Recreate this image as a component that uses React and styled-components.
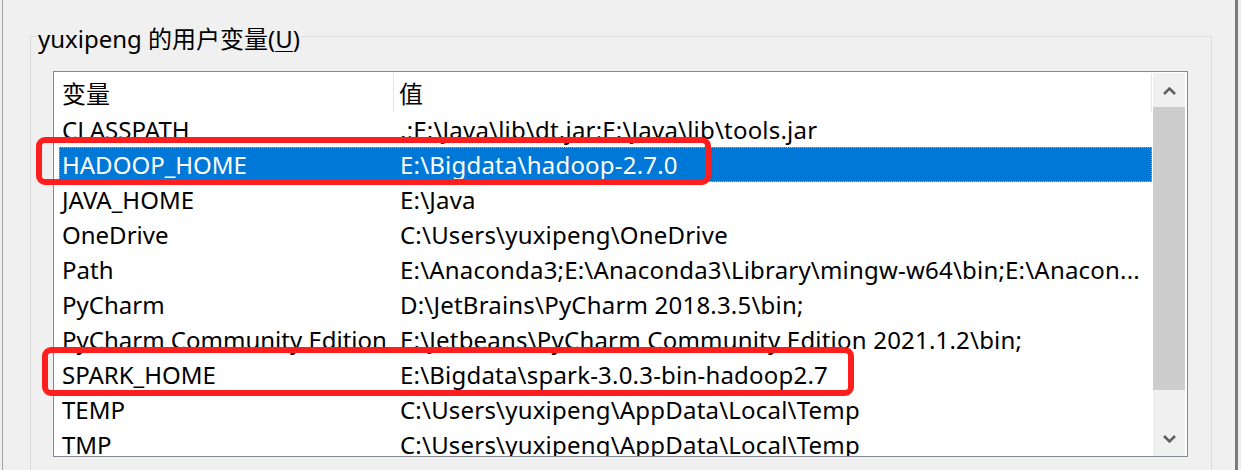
import React from "react";
import styled, { createGlobalStyle } from "styled-components";

const GlobalStyle = createGlobalStyle`
  body {
    margin: 0;
    background: #f0f0f0;
    font-family: "Noto Sans", "Noto Sans CJK SC", sans-serif;
  }
`;

const Screen = styled.div`
  position: relative;
  width: 1241px;
  height: 470px;
  overflow: hidden;
  display: flex;
  background: #f0f0f0;
  color: #000;
`;

const LeftEdge = styled.div`
  width: 2px;
  border-right: 1px solid #a0a0a0;
`;

const RightEdge = styled.div`
  width: 3px;
  border-left: 3px solid #7a7a7a;
  background: #eeeeee;
`;

const Main = styled.div`
  flex: 1;
  padding: 19px 23px 0 27px;
`;

const GroupBox = styled.fieldset`
  margin: 0;
  padding: 18px 23px 0 22px;
  border: 1px solid #dcdcdc;
  border-bottom: none;
  height: 500px;
  box-sizing: border-box;
`;

const Title = styled.legend`
  margin-left: -16px;
  padding: 6px 1px 0;
  font-size: 24px;
  line-height: 28px;
  color: #000;

  u {
    text-decoration-thickness: 1px;
    text-underline-offset: 3px;
  }
`;

const ListView = styled.div`
  display: flex;
  height: 386px;
  box-sizing: border-box;
  border: 1px solid #828790;
  background: #fff;
`;

const Table = styled.div`
  flex: 1;
  padding: 0 1px 0 5px;
  overflow: hidden;
  font-size: 24px;
`;

const Header = styled.div`
  display: grid;
  grid-template-columns: 335px 1fr;
  height: 40px;
  padding-top: 1px;
  box-sizing: border-box;
`;

const HeaderCell = styled.div`
  display: flex;
  align-items: center;
  padding-left: ${(p) => p.$pad}px;
  border-right: 1px solid #e5e5e5;
`;

const Row = styled.div`
  display: grid;
  grid-template-columns: 338px 1fr;
  height: 35px;
  line-height: 35px;
  align-items: center;
  white-space: nowrap;
  background: ${(p) => (p.$selected ? "#0078d7" : "transparent")};
  color: ${(p) => (p.$selected ? "#fff" : "#000")};
  outline: ${(p) => (p.$selected ? "1px dotted #e9a25b" : "none")};
  outline-offset: -1px;
`;

const Cell = styled.div`
  padding-left: 3px;
  overflow: ${(p) => (p.$value ? "hidden" : "visible")};
  letter-spacing: ${(p) => (p.$value ? "0.2px" : "0")};
`;

const ScrollBar = styled.div`
  width: 32px;
  margin: 1px 2px 0 0;
  display: flex;
  flex-direction: column;
  background: #f0f0f0;
`;

const ArrowButton = styled.div`
  height: 34px;
  display: flex;
  align-items: center;
  justify-content: center;
`;

const Thumb = styled.div`
  height: 283px;
  background: #cdcdcd;
`;

const Track = styled.div`
  flex: 1;
`;

const Mark = styled.div`
  position: absolute;
  left: ${(p) => p.$x}px;
  top: ${(p) => p.$y}px;
  width: ${(p) => p.$w}px;
  height: ${(p) => p.$h}px;
  box-sizing: border-box;
  border: 6px solid #fe1e1e;
  border-radius: 9px;
`;

const Chevron = ({ up }) => (
  <svg width="13" height="9" viewBox="0 0 13 9">
    <path
      d={up ? "M1 8 L6.5 2.5 L12 8" : "M1 1 L6.5 6.5 L12 1"}
      fill="none"
      stroke="#606060"
      strokeWidth="2.6"
    />
  </svg>
);

const rows = [
  ["CLASSPATH", ".;E:\\Java\\lib\\dt.jar;E:\\Java\\lib\\tools.jar"],
  ["HADOOP_HOME", "E:\\Bigdata\\hadoop-2.7.0", true],
  ["JAVA_HOME", "E:\\Java"],
  ["OneDrive", "C:\\Users\\yuxipeng\\OneDrive"],
  ["Path", "E:\\Anaconda3;E:\\Anaconda3\\Library\\mingw-w64\\bin;E:\\Anacon..."],
  ["PyCharm", "D:\\JetBrains\\PyCharm 2018.3.5\\bin;"],
  ["PyCharm Community Edition", "E:\\Jetbeans\\PyCharm Community Edition 2021.1.2\\bin;"],
  ["SPARK_HOME", "E:\\Bigdata\\spark-3.0.3-bin-hadoop2.7"],
  ["TEMP", "C:\\Users\\yuxipeng\\AppData\\Local\\Temp"],
  ["TMP", "C:\\Users\\yuxipeng\\AppData\\Local\\Temp"],
];

export default function App() {
  return (
    <>
      <GlobalStyle />
      <Screen>
        <LeftEdge />
        <Main>
          <GroupBox>
            <Title>
              yuxipeng 的用户变量(<u>U</u>)
            </Title>
            <ListView>
              <Table>
                <Header>
                  <HeaderCell $pad={3}>变量</HeaderCell>
                  <HeaderCell $pad={5}>值</HeaderCell>
                </Header>
                {rows.map(([name, value, selected]) => (
                  <Row key={name} $selected={selected}>
                    <Cell>{name}</Cell>
                    <Cell $value>{value}</Cell>
                  </Row>
                ))}
              </Table>
              <ScrollBar>
                <ArrowButton>
                  <Chevron up />
                </ArrowButton>
                <Thumb />
                <Track />
                <ArrowButton>
                  <Chevron />
                </ArrowButton>
              </ScrollBar>
            </ListView>
          </GroupBox>
        </Main>
        <RightEdge />
        <Mark $x={36} $y={137} $w={675} $h={48} />
        <Mark $x={42} $y={347} $w={812} $h={49} />
      </Screen>
    </>
  );
}
